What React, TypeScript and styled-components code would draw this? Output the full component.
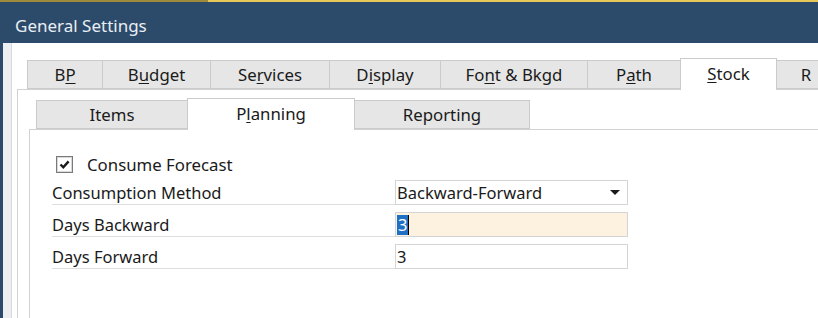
import React from "react";
import styled, { createGlobalStyle } from "styled-components";

const GlobalStyle = createGlobalStyle`
  html, body {
    margin: 0;
    padding: 0;
    background: #ffffff;
  }
  body {
    font-family: "Noto Sans", "Open Sans", sans-serif;
  }
`;

const Window = styled.div`
  width: 818px;
  height: 318px;
  display: flex;
  flex-direction: column;
  overflow: hidden;
  background: #ffffff;
`;

const Accent = styled.div`
  height: 2px;
  background: linear-gradient(to right, #a08a3c 0, #a08a3c 208px, #e9c85a 208px);
`;

const TitleBar = styled.div`
  height: 41px;
  box-sizing: border-box;
  padding: 5px 0 0 15px;
  background: #2c4b6a;
  color: #e9eef4;
  font-size: 17px;
  display: flex;
  align-items: center;
`;

const Body = styled.div`
  flex: 1;
  display: flex;
  min-height: 0;
`;

const EdgeDark = styled.div`
  width: 3px;
  background: #2c4b6a;
`;

const Gutter = styled.div`
  width: 8px;
  background: #eceef1;
  border-right: 1px solid #d6d9dd;
`;

const Content = styled.div`
  flex: 1;
  padding: 17px 0 0 5px;
  display: flex;
  flex-direction: column;
  min-width: 0;
`;

const TabStrip = styled.div<{ $indent: number }>`
  display: flex;
  align-items: flex-end;
  padding-left: ${(p) => p.$indent}px;
  height: 29px;
  position: relative;
  z-index: 1;
`;

const Tab = styled.div<{ $w: number; $active?: boolean }>`
  flex: none;
  width: ${(p) => p.$w}px;
  height: ${(p) => (p.$active ? 32 : 29)}px;
  margin-bottom: ${(p) => (p.$active ? -1 : 0)}px;
  box-sizing: border-box;
  background: ${(p) => (p.$active ? "#ffffff" : "#e6e6e6")};
  border: 1px solid #cbcbcb;
  border-bottom: ${(p) => (p.$active ? "none" : "1px solid #cbcbcb")};
  margin-right: -1px;
  display: flex;
  align-items: center;
  justify-content: center;
  font-size: 16.8px;
  color: #1a1a1a;
  white-space: nowrap;
  overflow: hidden;
  padding-bottom: ${(p) => (p.$active ? 2 : 1)}px;

  u {
    text-underline-offset: 2px;
  }
`;

const Panel = styled.div<{ $pad: string }>`
  flex: 1;
  border-top: 1px solid #d2d2d2;
  border-left: 1px solid #d2d2d2;
  padding: ${(p) => p.$pad};
  display: flex;
  flex-direction: column;
  min-height: 0;
`;

const Form = styled.div`
  padding: 25px 0 0 22px;
  display: flex;
  flex-direction: column;
`;

const CheckRow = styled.label`
  display: flex;
  align-items: center;
  gap: 14px;
  height: 18px;
  padding-left: 4px;
  font-size: 16.8px;
  color: #1a1a1a;
`;

const Box = styled.span`
  width: 17px;
  height: 17px;
  box-sizing: border-box;
  border: 1px solid #7a7a7a;
  box-shadow: inset 0 0 0 1px #d8d8d8;
  background: #ffffff;
  display: flex;
  align-items: center;
  justify-content: center;
`;

const FieldRow = styled.div`
  display: flex;
  align-items: flex-end;
  height: 32px;
`;

const Label = styled.div`
  width: 343px;
  box-sizing: border-box;
  height: 25px;
  border-bottom: 1px solid #dedede;
  font-size: 16.5px;
  color: #1a1a1a;
  display: flex;
  align-items: center;
`;

const Field = styled.div<{ $bg?: string }>`
  width: 233px;
  height: 25px;
  box-sizing: border-box;
  border: 1px solid #d4d4d4;
  background: ${(p) => p.$bg || "#ffffff"};
  display: flex;
  align-items: center;
  justify-content: space-between;
  padding: 0 7px 0 1px;
  font-size: 16.5px;
  color: #1a1a1a;
`;

const Selected = styled.span`
  background: #1f6fc5;
  color: #ffffff;
  padding: 0 1px;
  line-height: 20px;
  border-right: 1px solid #000;
`;

const Caret = styled.span`
  width: 0;
  height: 0;
  border-left: 5px solid transparent;
  border-right: 5px solid transparent;
  border-top: 5px solid #1a1a1a;
`;

const topTabs = [
  { w: 76, label: <>B<u>P</u></> },
  { w: 109, label: <>B<u>u</u>dget</> },
  { w: 120, label: <>Se<u>r</u>vices</> },
  { w: 112, label: <>D<u>i</u>splay</> },
  { w: 148, label: <>Fo<u>n</u>t &amp; Bkgd</> },
  { w: 94, label: <>P<u>a</u>th</> },
  { w: 97, label: <><u>S</u>tock</>, active: true },
  { w: 60, label: <>R</> },
];

const innerTabs = [
  { w: 152, label: <>Items</> },
  { w: 168, label: <>P<u>l</u>anning</>, active: true },
  { w: 176, label: <>Reporting</> },
];

const App = () => {
  return (
    <Window>
      <GlobalStyle />
      <Accent />
      <TitleBar>General Settings</TitleBar>
      <Body>
        <EdgeDark />
        <Gutter />
        <Content>
          <TabStrip $indent={10}>
            {topTabs.map((t, i) => (
              <Tab key={i} $w={t.w} $active={t.active}>
                {t.label}
              </Tab>
            ))}
          </TabStrip>
          <Panel $pad="10px 0 0 11px">
            <TabStrip $indent={7}>
              {innerTabs.map((t, i) => (
                <Tab key={i} $w={t.w} $active={t.active}>
                  {t.label}
                </Tab>
              ))}
            </TabStrip>
            <Panel $pad="0">
              <Form>
                <CheckRow>
                  <Box>
                    <svg width="11" height="11" viewBox="0 0 11 11">
                      <path
                        d="M1.5 5.5 L4.3 8.3 L9.6 2.4"
                        fill="none"
                        stroke="#1a1a1a"
                        strokeWidth="2.4"
                      />
                    </svg>
                  </Box>
                  Consume Forecast
                </CheckRow>
                <FieldRow>
                  <Label>Consumption Method</Label>
                  <Field>
                    Backward-Forward
                    <Caret />
                  </Field>
                </FieldRow>
                <FieldRow>
                  <Label>Days Backward</Label>
                  <Field $bg="#fdf1df">
                    <Selected>3</Selected>
                  </Field>
                </FieldRow>
                <FieldRow>
                  <Label>Days Forward</Label>
                  <Field>3</Field>
                </FieldRow>
              </Form>
            </Panel>
          </Panel>
        </Content>
      </Body>
    </Window>
  );
};

export default App;
